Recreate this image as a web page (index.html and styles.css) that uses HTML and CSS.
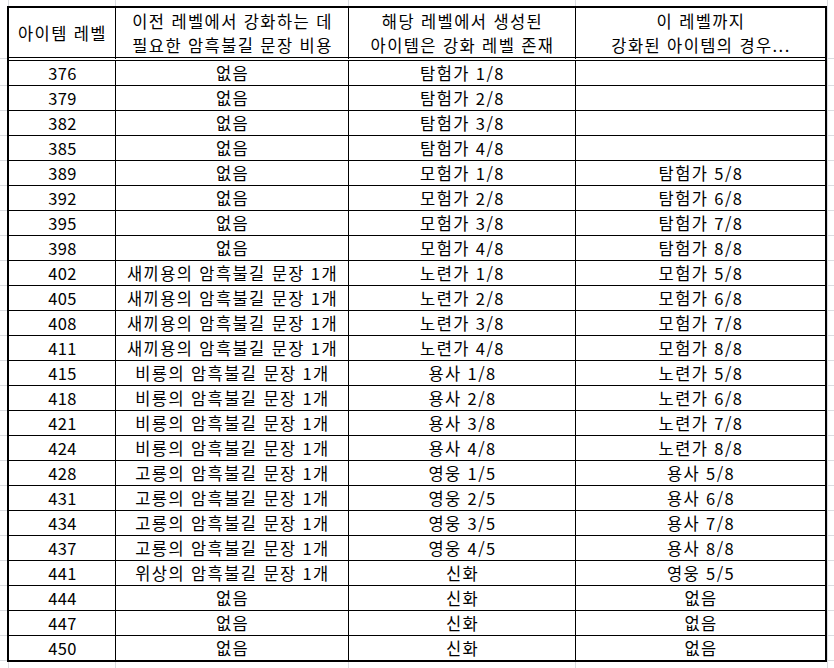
FILE: index.html
```html
<!DOCTYPE html>
<html lang="ko">
<head>
<meta charset="utf-8">
<title>아이템 레벨</title>
<link rel="stylesheet" href="styles.css">
</head>
<body>
<table class="sheet">
  <colgroup>
    <col class="c1"><col class="c2"><col class="c3"><col class="c4">
  </colgroup>
  <thead>
    <tr>
      <th>아이템 레벨</th>
      <th>이전 레벨에서 강화하는 데<br>필요한 암흑불길 문장 비용</th>
      <th>해당 레벨에서 생성된<br>아이템은 강화 레벨 존재</th>
      <th>이 레벨까지<br>강화된 아이템의 경우...</th>
    </tr>
  </thead>
  <tbody>
    <tr><td>376</td><td>없음</td><td>탐험가 1/8</td><td></td></tr>
    <tr><td>379</td><td>없음</td><td>탐험가 2/8</td><td></td></tr>
    <tr><td>382</td><td>없음</td><td>탐험가 3/8</td><td></td></tr>
    <tr><td>385</td><td>없음</td><td>탐험가 4/8</td><td></td></tr>
    <tr><td>389</td><td>없음</td><td>모험가 1/8</td><td>탐험가 5/8</td></tr>
    <tr><td>392</td><td>없음</td><td>모험가 2/8</td><td>탐험가 6/8</td></tr>
    <tr><td>395</td><td>없음</td><td>모험가 3/8</td><td>탐험가 7/8</td></tr>
    <tr><td>398</td><td>없음</td><td>모험가 4/8</td><td>탐험가 8/8</td></tr>
    <tr><td>402</td><td>새끼용의 암흑불길 문장 1개</td><td>노련가 1/8</td><td>모험가 5/8</td></tr>
    <tr><td>405</td><td>새끼용의 암흑불길 문장 1개</td><td>노련가 2/8</td><td>모험가 6/8</td></tr>
    <tr><td>408</td><td>새끼용의 암흑불길 문장 1개</td><td>노련가 3/8</td><td>모험가 7/8</td></tr>
    <tr><td>411</td><td>새끼용의 암흑불길 문장 1개</td><td>노련가 4/8</td><td>모험가 8/8</td></tr>
    <tr><td>415</td><td>비룡의 암흑불길 문장 1개</td><td>용사 1/8</td><td>노련가 5/8</td></tr>
    <tr><td>418</td><td>비룡의 암흑불길 문장 1개</td><td>용사 2/8</td><td>노련가 6/8</td></tr>
    <tr><td>421</td><td>비룡의 암흑불길 문장 1개</td><td>용사 3/8</td><td>노련가 7/8</td></tr>
    <tr><td>424</td><td>비룡의 암흑불길 문장 1개</td><td>용사 4/8</td><td>노련가 8/8</td></tr>
    <tr><td>428</td><td>고룡의 암흑불길 문장 1개</td><td>영웅 1/5</td><td>용사 5/8</td></tr>
    <tr><td>431</td><td>고룡의 암흑불길 문장 1개</td><td>영웅 2/5</td><td>용사 6/8</td></tr>
    <tr><td>434</td><td>고룡의 암흑불길 문장 1개</td><td>영웅 3/5</td><td>용사 7/8</td></tr>
    <tr><td>437</td><td>고룡의 암흑불길 문장 1개</td><td>영웅 4/5</td><td>용사 8/8</td></tr>
    <tr><td>441</td><td>위상의 암흑불길 문장 1개</td><td>신화</td><td>영웅 5/5</td></tr>
    <tr><td>444</td><td>없음</td><td>신화</td><td>없음</td></tr>
    <tr><td>447</td><td>없음</td><td>신화</td><td>없음</td></tr>
    <tr><td>450</td><td>없음</td><td>신화</td><td>없음</td></tr>
  </tbody>
</table>
</body>
</html>
```

FILE: styles.css
```css
html, body {
  height: 100%;
}

body {
  margin: 0;
  background-color: #ffffff;
  background-image:
    linear-gradient(#dadce0, #dadce0),
    linear-gradient(#dadce0, #dadce0),
    linear-gradient(#dadce0, #dadce0),
    linear-gradient(#dadce0, #dadce0),
    linear-gradient(#dadce0, #dadce0),
    linear-gradient(#dadce0, #dadce0),
    repeating-linear-gradient(to bottom, #dadce0 0 1px, transparent 1px 25px);
  background-size:
    1px 100%,
    1px 100%,
    1px 100%,
    1px 100%,
    1px 100%,
    100% 1px,
    100% 610px;
  background-position:
    8px 0,
    115px 0,
    348px 0,
    575px 0,
    827px 0,
    0 58px,
    0 85px;
  background-repeat: no-repeat;
  font-family: "Noto Sans CJK KR", "Noto Sans", sans-serif;
  color: #000;
}

.sheet {
  margin: 6px 0 0 7px;
  width: 820px;
  box-sizing: border-box;
  table-layout: fixed;
  border-collapse: separate;
  border-spacing: 0;
  border: 2px solid #000;
  background: #fff;
  font-size: 16.5px;
  letter-spacing: 1.4px;
}

.c1 { width: 107px; }
.c2 { width: 233px; }
.c3 { width: 227px; }
.c4 { width: 249px; }

.sheet th,
.sheet td {
  box-sizing: border-box;
  padding: 0 0 0 1px;
  text-align: center;
  vertical-align: middle;
  font-weight: normal;
  white-space: nowrap;
  border-right: 1px solid #000;
  border-bottom: 1px solid #000;
}

.sheet td:first-child {
  letter-spacing: 0.4px;
}

.sheet th:last-child,
.sheet td:last-child {
  border-right: 0;
}

.sheet th {
  height: 53px;
  line-height: 24px;
  border-bottom: 4px double #000;
}

.sheet td {
  height: 25px;
  line-height: 24px;
}

.sheet tbody tr:last-child td {
  border-bottom: 0;
  height: 24px;
}
```
